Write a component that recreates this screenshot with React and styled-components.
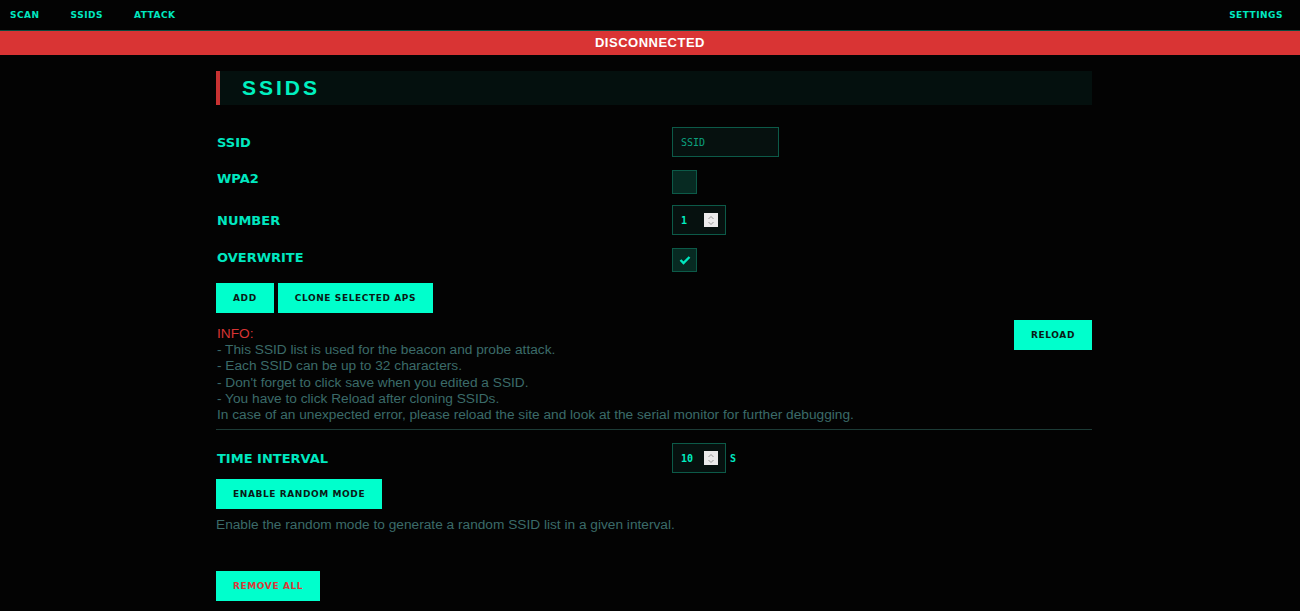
import React, { useState } from "react";
import styled, { createGlobalStyle } from "styled-components";

const GlobalStyle = createGlobalStyle`
  html, body {
    margin: 0;
    padding: 0;
    background: #030303;
    font-family: "Liberation Sans", Arial, sans-serif;
  }
`;

const Nav = styled.nav`
  display: flex;
  align-items: center;
  height: 31px;
  padding: 0 10px;
  border-bottom: 1px solid #0c4a3e;
  box-sizing: border-box;
`;

const NavLink = styled.a`
  color: #00e8c0;
  font-family: "DejaVu Sans", Verdana, sans-serif;
  font-size: 9px;
  font-weight: bold;
  letter-spacing: 0.5px;
  margin-left: ${(p) => (p.$right ? "auto" : "0")};
  margin-right: ${(p) => (p.$right ? "7px" : "31px")};
  text-decoration: none;
  cursor: pointer;
`;

const StatusBar = styled.div`
  background: #d93434;
  color: #fff;
  font-weight: bold;
  font-size: 13px;
  letter-spacing: 0.5px;
  text-align: center;
  height: 24px;
  line-height: 24px;
`;

const Main = styled.main`
  width: 884px;
  box-sizing: border-box;
  margin: 16px auto 0;
  padding-left: 8px;
`;

const Title = styled.h1`
  margin: 0 0 22px;
  height: 34px;
  line-height: 34px;
  background: #04100e;
  border-left: 4px solid #c83232;
  padding-left: 22px;
  color: #00f0c0;
  font-size: 21px;
  letter-spacing: 3px;
  font-weight: bold;
`;

const Row = styled.div`
  display: grid;
  grid-template-columns: 456px 1fr;
  align-items: center;
  margin-bottom: ${(p) => p.$gap || 0}px;
`;

const Label = styled.label`
  color: #00e8c0;
  font-family: "DejaVu Sans", Verdana, sans-serif;
  font-weight: bold;
  font-size: 13px;
  padding-left: 1px;
  margin-bottom: ${(p) => p.$lift || 0}px;
`;

const TextInput = styled.input`
  width: 107px;
  height: 30px;
  box-sizing: border-box;
  background: #06110f;
  border: 1px solid #0c5a48;
  color: #0ca07e;
  font-family: "DejaVu Sans Mono", monospace;
  font-size: 10px;
  padding: 0 8px;
  outline: none;
  &::placeholder {
    color: #0ca07e;
  }
`;

const NumberBox = styled.div`
  display: flex;
  align-items: center;
  gap: 4px;
`;

const NumberField = styled.div`
  width: 54px;
  height: 30px;
  box-sizing: border-box;
  background: #06110f;
  border: 1px solid #0c5a48;
  display: flex;
  align-items: center;
  padding: 0 7px 0 8px;
  justify-content: space-between;
  color: #00f0c0;
  font-family: "DejaVu Sans Mono", monospace;
  font-size: 10px;
  font-weight: bold;
`;

const Spinner = styled.span`
  width: 14px;
  height: 14px;
  background: #ebebeb;
  display: flex;
  align-items: center;
  justify-content: center;
`;

const Unit = styled.span`
  color: #00e8c0;
  font-family: "DejaVu Sans Mono", monospace;
  font-size: 10px;
  font-weight: bold;
`;

const Check = styled.div`
  width: 25px;
  height: 24px;
  box-sizing: border-box;
  background: #072a22;
  border: 1px solid #0c5a48;
  display: flex;
  align-items: center;
  justify-content: center;
  cursor: pointer;
`;

const Buttons = styled.div`
  display: flex;
  gap: 4px;
  margin-top: ${(p) => p.$top ?? 0}px;
`;

const Button = styled.button`
  height: 30px;
  padding: 0 ${(p) => p.$pad || 17}px;
  background: #00ffcc;
  border: none;
  color: ${(p) => (p.$danger ? "#d83a3a" : "#0a1a16")};
  font-family: "DejaVu Sans", Verdana, sans-serif;
  font-weight: bold;
  font-size: 9px;
  letter-spacing: 0.6px;
  cursor: pointer;
`;

const InfoRow = styled.div`
  display: flex;
  justify-content: space-between;
  align-items: flex-start;
  margin-top: 13px;
`;

const InfoText = styled.p`
  margin: 0;
  color: #3b6b69;
  font-size: 13.7px;
  line-height: 16.2px;
  padding-left: 1px;
`;

const InfoHead = styled.span`
  color: #d83434;
`;

const ReloadButton = styled(Button)`
  margin-top: -6px;
`;

const Divider = styled.hr`
  border: none;
  border-top: 1px solid #1c3b36;
  margin: 6px 0 13px;
`;

const Hint = styled.p`
  margin: 8px 0 0;
  color: #3b6b69;
  font-size: 13.7px;
`;

const SpinIcon = () => (
  <svg width="8" height="11" viewBox="0 0 8 11">
    <path d="M1.5 4 L4 1.5 L6.5 4" fill="none" stroke="#9a9a9a" strokeWidth="1" />
    <path d="M1.5 7 L4 9.5 L6.5 7" fill="none" stroke="#9a9a9a" strokeWidth="1" />
  </svg>
);

const Tick = () => (
  <svg width="12" height="10" viewBox="0 0 12 10">
    <path d="M1.5 5 L4.5 8 L10.5 2" fill="none" stroke="#00e8c0" strokeWidth="2.4" />
  </svg>
);

const NumberInput = ({ value, unit }) => (
  <NumberBox>
    <NumberField>
      <span>{value}</span>
      <Spinner><SpinIcon /></Spinner>
    </NumberField>
    {unit && <Unit>{unit}</Unit>}
  </NumberBox>
);

const App = () => {
  const [wpa2, setWpa2] = useState(false);
  const [overwrite, setOverwrite] = useState(true);

  return (
    <React.Fragment>
      <GlobalStyle />
      <Nav>
        <NavLink>SCAN</NavLink>
        <NavLink>SSIDS</NavLink>
        <NavLink>ATTACK</NavLink>
        <NavLink $right>SETTINGS</NavLink>
      </Nav>
      <StatusBar>DISCONNECTED</StatusBar>
      <Main>
        <Title>SSIDS</Title>
        <Row $gap={13}>
          <Label>SSID</Label>
          <TextInput placeholder="SSID" />
        </Row>
        <Row $gap={11}>
          <Label $lift={8}>WPA2</Label>
          <Check onClick={() => setWpa2(!wpa2)}>{wpa2 && <Tick />}</Check>
        </Row>
        <Row $gap={13}>
          <Label>NUMBER</Label>
          <NumberInput value="1" />
        </Row>
        <Row $gap={11}>
          <Label $lift={6}>OVERWRITE</Label>
          <Check onClick={() => setOverwrite(!overwrite)}>{overwrite && <Tick />}</Check>
        </Row>
        <Buttons>
          <Button>ADD</Button>
          <Button>CLONE SELECTED APS</Button>
        </Buttons>
        <InfoRow>
          <InfoText>
            <InfoHead>INFO:</InfoHead><br />
            - This SSID list is used for the beacon and probe attack.<br />
            - Each SSID can be up to 32 characters.<br />
            - Don't forget to click save when you edited a SSID.<br />
            - You have to click Reload after cloning SSIDs.<br />
            In case of an unexpected error, please reload the site and look at the serial monitor for further debugging.
          </InfoText>
          <ReloadButton>RELOAD</ReloadButton>
        </InfoRow>
        <Divider />
        <Row $gap={6}>
          <Label>TIME INTERVAL</Label>
          <NumberInput value="10" unit="S" />
        </Row>
        <Buttons>
          <Button>ENABLE RANDOM MODE</Button>
        </Buttons>
        <Hint>Enable the random mode to generate a random SSID list in a given interval.</Hint>
        <Buttons $top={39}>
          <Button $danger>REMOVE ALL</Button>
        </Buttons>
      </Main>
    </React.Fragment>
  );
};

export default App;
